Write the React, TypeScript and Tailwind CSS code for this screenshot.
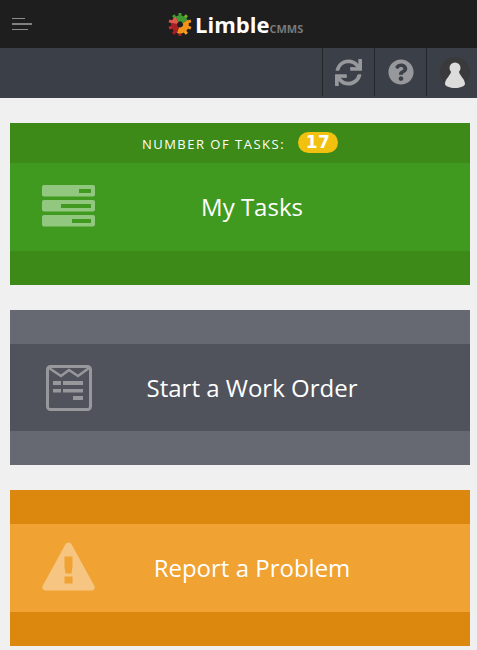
import React from 'react';
import { FaSync, FaQuestionCircle } from 'react-icons/fa';

const gearTeeth = [
  { angle: 0, fill: '#3f9a33' },
  { angle: 36, fill: '#6fb52c' },
  { angle: 72, fill: '#f2931c' },
  { angle: 108, fill: '#f2931c' },
  { angle: 144, fill: '#f7a92c' },
  { angle: 180, fill: '#a81f26' },
  { angle: 216, fill: '#a81f26' },
  { angle: 252, fill: '#c9302c' },
  { angle: 288, fill: '#e2574c' },
  { angle: 324, fill: '#3f9a33' },
];

const LimbleLogo = () => (
  <svg width="24" height="23" viewBox="0 0 24 23" className="shrink-0">
    {gearTeeth.map((t) => (
      <rect key={t.angle} x="10.500" y="0" width="3" height="4" fill={t.fill} transform={`rotate(${t.angle} 12 11.500)`} />
    ))}
    <g transform="rotate(-120 12 11.500)" fill="none" strokeWidth="6">
      <circle cx="12" cy="11.500" r="6" pathLength="100" stroke="#3f9a33" strokeDasharray="25 75" />
      <circle cx="12" cy="11.500" r="6" pathLength="100" stroke="#f2931c" strokeDasharray="39 61" strokeDashoffset="-25" />
      <circle cx="12" cy="11.500" r="6" pathLength="100" stroke="#a81f26" strokeDasharray="22 78" strokeDashoffset="-64" />
      <circle cx="12" cy="11.500" r="6" pathLength="100" stroke="#e2574c" strokeDasharray="14 86" strokeDashoffset="-86" />
    </g>
  </svg>
);

const TasksIcon = () => (
  <svg width="54" height="42" viewBox="0 0 54 42">
    <rect x="0" y="0" width="53" height="11.500" rx="2" fill="#91c77e" />
    <rect x="37" y="4" width="12" height="4" fill="#419a20" />
    <rect x="0" y="15" width="53" height="11.500" rx="2" fill="#91c77e" />
    <rect x="19" y="19" width="30" height="4" fill="#419a20" />
    <rect x="0" y="30" width="53" height="11.500" rx="2" fill="#91c77e" />
    <rect x="30" y="34" width="19" height="4" fill="#419a20" />
  </svg>
);

const WorkOrderIcon = () => (
  <svg width="46" height="46" viewBox="0 0 46 46" fill="none">
    <rect x="1.500" y="1.500" width="43" height="43" rx="3" stroke="#96989c" strokeWidth="3" />
    <path d="M3 3l12 8 8-6 9 6 11-8" stroke="#96989c" strokeWidth="2.500" />
    <rect x="7" y="16" width="8" height="4" fill="#96989c" />
    <rect x="17" y="16" width="20" height="4" fill="#96989c" />
    <rect x="7" y="24" width="8" height="3.500" fill="#96989c" />
    <rect x="17" y="24" width="20" height="3.500" fill="#96989c" />
    <rect x="27" y="31" width="10" height="4" fill="#96989c" />
  </svg>
);

const WarningIcon = () => (
  <svg width="53" height="49" viewBox="0.500 0.500 53 49">
    <path
      d="M27 1c1.500 0 2.500 .8 3.300 2.200l22.500 41c1.200 2.400 0 4.800-2.800 4.800H4c-2.800 0-4-2.400-2.800-4.800l22.500-41C24.500 1.800 25.500 1 27 1z"
      fill="#f6c581"
    />
    <path d="M23 15h8v10l-1 7h-6l-1-7z" fill="#f0a232" />
    <rect x="23" y="35" width="8" height="7" fill="#f0a232" />
  </svg>
);

interface TileProps {
  top: string;
  mid: string;
  label: string;
  icon: React.ReactNode;
  topClass: string;
  midHeight: string;
  iconClass?: string;
  children?: React.ReactNode;
}

const Tile: React.FC<TileProps> = ({ top, mid, label, icon, topClass, midHeight, iconClass, children }) => (
  <div className={`ml-[10px] w-[460px] ${top}`}>
    <div className={`${topClass} flex items-center justify-center`}>{children}</div>
    <div className={`${mid} ${midHeight} flex items-center`}>
      <div className={`w-[117px] flex justify-center shrink-0 ${iconClass ?? ''}`}>{icon}</div>
      <div className="flex-1 pr-[96px] pl-[3px] text-white text-[24px] leading-none text-center whitespace-nowrap">{label}</div>
    </div>
    <div className="h-[34px]" />
  </div>
);

export default function App() {
  return (
    <div className="w-[477px] h-[650px] overflow-hidden bg-[#f0f0f0] font-['Open_Sans',sans-serif]">
      {/* Header */}
      <header className="h-[48px] bg-[#1e1e1e] flex items-center relative">
        <div className="absolute left-[12px] top-[18px] flex flex-col gap-[4px]">
          <div className="w-[13px] h-[1px] bg-[#8c8c8c]" />
          <div className="w-[20px] h-[2px] bg-[#808080]" />
          <div className="w-[16px] h-[1px] bg-[#8c8c8c]" />
        </div>
        <div className="ml-[168px] flex items-center">
          <LimbleLogo />
          <span className="text-white font-bold text-[22px] leading-none ml-[3px]">Limble</span>
          <span className="text-[#77797c] font-bold text-[11px] leading-none mt-[9px]">CMMS</span>
        </div>
      </header>

      {/* Toolbar */}
      <div className="h-[50px] bg-[#3b3f47] flex justify-end">
        <div className="w-[52px] h-[48px] border-l border-[#24262a] flex items-center justify-center">
          <FaSync className="text-[#96989c] text-[27px]" />
        </div>
        <div className="w-[52px] h-[48px] border-l border-[#24262a] flex items-center justify-center">
          <FaQuestionCircle className="text-[#96989c] text-[26px]" />
        </div>
        <div className="w-[51px] h-[48px] border-l border-[#24262a] flex items-center justify-center pl-[6px]">
          <svg width="30" height="31" viewBox="0 0 30 31">
            <circle cx="15" cy="15" r="15" fill="#3a3a3c" />
            <circle cx="15" cy="11" r="5.500" fill="#dcdcdc" />
            <path d="M11 15c-1 4-6 7-6 12 0 2 5 4 10 4s10-2 10-4c0-5-5-8-6-12z" fill="#dcdcdc" />
          </svg>
        </div>
      </div>

      <div className="pt-[25px] flex flex-col gap-[25px]">
        <Tile
          top="bg-[#3d8a18]"
          mid="bg-[#419a20]"
          midHeight="h-[88px]"
          label="My Tasks"
          icon={<TasksIcon />}
          iconClass="mb-[2px]"
          topClass="h-[40px] gap-[13px]"
        >
          <span className="text-white text-[13px] tracking-[1.500px] whitespace-nowrap pt-[3px]">NUMBER OF TASKS:</span>
          <span className="bg-[#f2c00e] text-white font-bold text-[17px] leading-none rounded-full w-[40px] h-[21px] flex items-center justify-center tracking-[0.500px] font-['DejaVu_Sans',sans-serif] mb-[2px]">17</span>
        </Tile>
        <Tile
          top="bg-[#666972]"
          mid="bg-[#50535b]"
          midHeight="h-[87px]"
          label="Start a Work Order"
          icon={<WorkOrderIcon />}
          topClass="h-[34px]"
        />
        <Tile
          top="bg-[#dc880f]"
          mid="bg-[#f0a232]"
          midHeight="h-[88px]"
          label="Report a Problem"
          icon={<WarningIcon />}
          iconClass="mb-[3px]"
          topClass="h-[34px]"
        />
      </div>
    </div>
  );
}
